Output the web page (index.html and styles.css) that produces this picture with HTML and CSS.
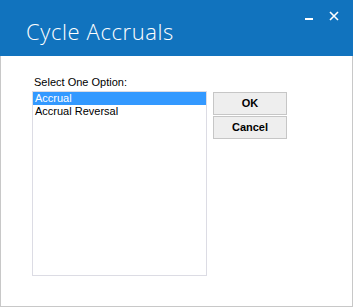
FILE: index.html
```html
<!DOCTYPE html>
<html>
<head>
<meta charset="utf-8">
<link rel="stylesheet" href="styles.css">
</head>
<body>
<div class="window">
  <div class="titlebar">
    <div class="title">Cycle Accruals</div>
    <div class="controls">
      <svg class="min" width="8" height="3" viewBox="0 0 8 3"><rect x="0" y="0" width="8" height="2" fill="#fff"/></svg>
      <svg class="close" width="10" height="10" viewBox="0 0 10 10"><path d="M1 1 L9 9 M9 1 L1 9" stroke="#fff" stroke-width="1.6"/></svg>
    </div>
  </div>
  <div class="body">
    <div class="left">
      <div class="label">Select One Option:</div>
      <div class="listbox">
        <div class="item selected">Accrual</div>
        <div class="item">Accrual Reversal</div>
      </div>
    </div>
    <div class="buttons">
      <div class="btn">OK</div>
      <div class="btn">Cancel</div>
    </div>
  </div>
</div>
</body>
</html>
```
FILE: styles.css
```css
html, body {
  margin: 0;
  padding: 0;
  background: #ffffff;
}
.window {
  width: 353px;
  height: 307px;
  display: flex;
  flex-direction: column;
  box-sizing: border-box;
}
.titlebar {
  height: 56px;
  background: #1173be;
  display: flex;
  align-items: flex-start;
  flex-shrink: 0;
}
.title {
  font-family: "Open Sans", sans-serif;
  font-weight: 300;
  font-size: 22px;
  letter-spacing: 0.6px;
  color: #ffffff;
  margin-left: 26px;
  margin-top: 16px;
  line-height: 30px;
}
.controls {
  margin-left: auto;
  display: flex;
  align-items: flex-start;
  margin-right: 14px;
  margin-top: 10px;
}
.min {
  margin-top: 8px;
  margin-right: 16px;
}
.close {
  display: block;
  margin-top: 1px;
}
.body {
  flex: 1;
  border: 1px solid #c8c8c8;
  border-top: none;
  display: flex;
  align-items: flex-start;
  padding-top: 20px;
  padding-left: 31px;
  font-family: "Liberation Sans", Arial, sans-serif;
  font-size: 11px;
  color: #000000;
}
.left {
  display: flex;
  flex-direction: column;
}
.label {
  line-height: 13px;
  padding-left: 2px;
  margin-bottom: 2px;
}
.listbox {
  width: 175px;
  height: 185px;
  box-sizing: border-box;
  border: 1px solid #dcdce4;
}
.item {
  height: 13px;
  line-height: 13px;
  padding-left: 2px;
}
.selected {
  background: #3399ff;
  color: #ffffff;
}
.buttons {
  display: flex;
  flex-direction: column;
  gap: 1px;
  margin-left: 6px;
  margin-top: 16px;
}
.btn {
  width: 74px;
  height: 23px;
  box-sizing: border-box;
  border: 1px solid #c6c6c6;
  background: #eeeeee;
  font-weight: bold;
  text-align: center;
  line-height: 21px;
}
```
